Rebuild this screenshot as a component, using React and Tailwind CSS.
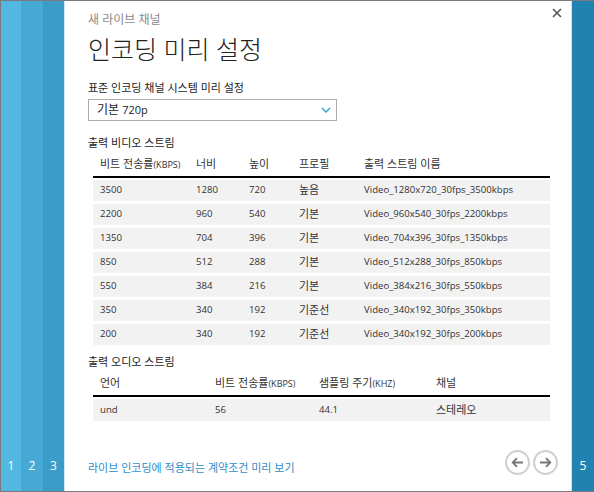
import React from 'react';

const font = { fontFamily: '"Open Sans", "Noto Sans CJK KR", sans-serif' };

const videoRows = [
    ['3500', '1280', '720', '높음', 'Video_1280x720_30fps_3500kbps'],
    ['2200', '960', '540', '기본', 'Video_960x540_30fps_2200kbps'],
    ['1350', '704', '396', '기본', 'Video_704x396_30fps_1350kbps'],
    ['850', '512', '288', '기본', 'Video_512x288_30fps_850kbps'],
    ['550', '384', '216', '기본', 'Video_384x216_30fps_550kbps'],
    ['350', '340', '192', '기준선', 'Video_340x192_30fps_350kbps'],
    ['200', '340', '192', '기준선', 'Video_340x192_30fps_200kbps'],
];

const Unit = ({ children }) => <span className="text-[9px]">{children}</span>;

const CircleButton = ({ dir }) => (
    <button className="w-[25px] h-[25px] rounded-full border-2 border-[#cfcfcf] flex items-center justify-center">
        <svg width="13" height="11" viewBox="0 0 13 11" fill="none" stroke="#777" strokeWidth="1.8">
            {dir === 'left' ? (
                <path d="M12 5.5H2M6 1.2L1.7 5.5 6 9.8" />
            ) : (
                <path d="M1 5.5h10M7 1.2l4.3 4.3L7 9.8" />
            )}
        </svg>
    </button>
);

export default function App() {
    return (
        <div style={font} className="w-[594px] h-[492px] flex border-t border-l border-b border-[#7a7a7a] bg-white overflow-hidden">
            <div className="w-[20px] bg-[#52b8e2] flex flex-col justify-end items-center pb-[16px] text-white text-[12px]">1</div>
            <div className="w-[22px] bg-[#46a9d5] flex flex-col justify-end items-center pb-[16px] text-white text-[12px]">2</div>
            <div className="w-[22px] bg-[#3b9cca] flex flex-col justify-end items-center pb-[16px] text-white text-[12px] border-r border-[#cde7f3]">3</div>

            <div className="relative flex-1 flex flex-col pl-[23px] pr-[21px] pt-[11px] text-[#222]">
                <button className="absolute right-[9px] top-[7px] text-[#555]">
                    <svg width="10" height="10" viewBox="0 0 10 10" stroke="#555" strokeWidth="1.6">
                        <path d="M1 1l8 8M9 1L1 9" />
                    </svg>
                </button>

                <div className="text-[12px] leading-[16px] text-[#8a8a8a]">새 라이브 채널</div>
                <h1 className="mt-[5px] text-[25px] leading-[32px] font-light text-[#222]">인코딩 미리 설정</h1>

                <div className="mt-[16px] text-[11px] leading-[14px]">표준 인코딩 채널 시스템 미리 설정</div>
                <div className="mt-[4px] w-[249px] h-[22px] border border-[#ababab] flex items-center justify-between pl-[8px] pr-[5px] text-[12px]">
                    <span>기본 <span className="text-[11px]">720p</span></span>
                    <svg width="10" height="6" viewBox="0 0 10 6" fill="none" stroke="#2d9bdc" strokeWidth="1.3">
                        <path d="M1 1l4 4 4-4" />
                    </svg>
                </div>

                <div className="mt-[15px] text-[11px] leading-[14px]">출력 비디오 스트림</div>
                <div className="ml-[5px] mt-[6px] text-[#333]">
                    <div className="grid grid-cols-[96px_53px_50px_65px_1fr] pl-[7px] h-[17px] items-center text-[11px] border-b-2 border-black box-content pb-[3px]">
                        <span>비트 전송률<Unit>(KBPS)</Unit></span>
                        <span>너비</span>
                        <span>높이</span>
                        <span>프로필</span>
                        <span>출력 스트림 이름</span>
                    </div>
                    <div className="flex flex-col gap-[3px] mt-[2px]">
                        {videoRows.map((r) => (
                            <div key={r[4]} className="grid grid-cols-[96px_53px_50px_65px_1fr] pl-[7px] h-[21px] items-center bg-[#f2f2f2] text-[9.6px]">
                                {r.map((c, i) => (
                                    <span key={i} className={i === 3 ? 'text-[11px]' : ''}>{c}</span>
                                ))}
                            </div>
                        ))}
                    </div>
                </div>

                <div className="mt-[10px] text-[11px] leading-[14px]">출력 오디오 스트림</div>
                <div className="ml-[5px] mt-[6px] text-[#333]">
                    <div className="grid grid-cols-[115px_104px_117px_1fr] pl-[7px] h-[17px] items-center text-[11px] border-b-2 border-black box-content pb-[3px]">
                        <span>언어</span>
                        <span>비트 전송률<Unit>(KBPS)</Unit></span>
                        <span>샘플링 주기<Unit>(KHZ)</Unit></span>
                        <span>채널</span>
                    </div>
                    <div className="grid grid-cols-[115px_104px_117px_1fr] pl-[7px] mt-[2px] h-[22px] items-center bg-[#f2f2f2] text-[9.6px]">
                        <span>und</span>
                        <span>56</span>
                        <span>44.1</span>
                        <span className="text-[11px]">스테레오</span>
                    </div>
                </div>

                <div className="mt-auto mb-[14px] flex items-end justify-between">
                    <a className="text-[11px] text-[#2f8bc8] mb-[1px]">라이브 인코딩에 적용되는 계약조건 미리 보기</a>
                    <div className="flex gap-[3px] mr-[-8px] mb-[2px]">
                        <CircleButton dir="left" />
                        <CircleButton dir="right" />
                    </div>
                </div>
            </div>

            <div className="w-[23px] bg-[#1f82b0] border-l border-[#c9e3f0] flex flex-col justify-end items-center pb-[16px] text-white text-[12px]">5</div>
        </div>
    );
}
